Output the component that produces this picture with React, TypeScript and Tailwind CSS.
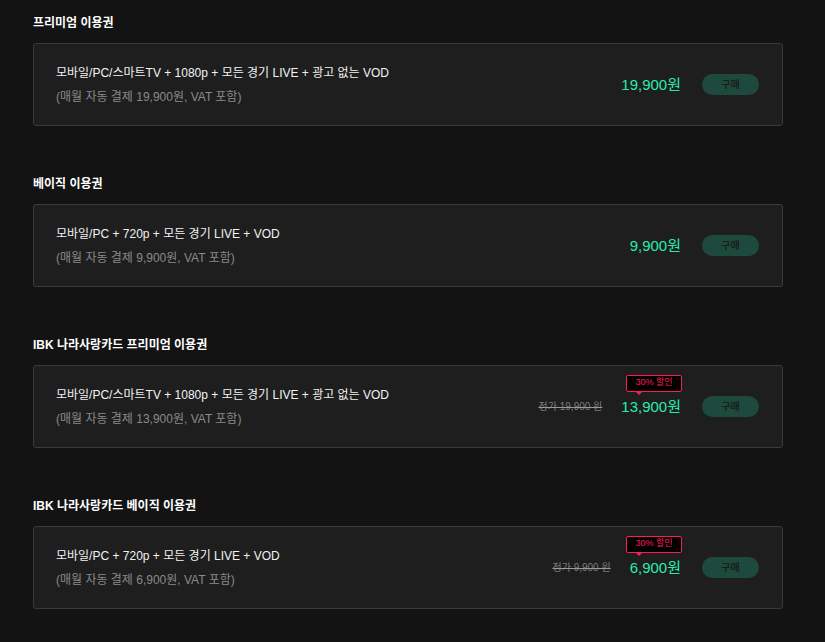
import React from 'react';

type Plan = {
  title: string;
  desc: string;
  billing: string;
  price: string;
  original?: string;
  discount?: string;
};

const plans: Plan[] = [
  {
    title: '프리미엄 이용권',
    desc: '모바일/PC/스마트TV + 1080p + 모든 경기 LIVE + 광고 없는 VOD',
    billing: '(매월 자동 결제 19,900원, VAT 포함)',
    price: '19,900원',
  },
  {
    title: '베이직 이용권',
    desc: '모바일/PC + 720p + 모든 경기 LIVE + VOD',
    billing: '(매월 자동 결제 9,900원, VAT 포함)',
    price: '9,900원',
  },
  {
    title: 'IBK 나라사랑카드 프리미엄 이용권',
    desc: '모바일/PC/스마트TV + 1080p + 모든 경기 LIVE + 광고 없는 VOD',
    billing: '(매월 자동 결제 13,900원, VAT 포함)',
    price: '13,900원',
    original: '정가 19,900 원',
    discount: '30% 할인',
  },
  {
    title: 'IBK 나라사랑카드 베이직 이용권',
    desc: '모바일/PC + 720p + 모든 경기 LIVE + VOD',
    billing: '(매월 자동 결제 6,900원, VAT 포함)',
    price: '6,900원',
    original: '정가 9,900 원',
    discount: '30% 할인',
  },
];

const PlanCard = ({ plan }: { plan: Plan }) => (
  <div className="flex items-center justify-between h-[83px] rounded-[3px] border border-[#3a3a3a] bg-[#1e1e1e] pl-[22px] pr-[23px]">
    <div className="flex flex-col gap-[4px] pt-[1px]">
      <p className="text-[12px] leading-[20px] text-[#f2f2f2]">{plan.desc}</p>
      <p className="text-[12px] leading-[20px] text-[#8a8a8a]">{plan.billing}</p>
    </div>
    <div className="flex items-center">
      {plan.original && (
        <span className="mr-[19px] text-[10px] text-[#7c7c7c] line-through decoration-[#9a9a9a]">
          {plan.original}
        </span>
      )}
      <div className="relative">
        {plan.discount && (
          <div className="absolute right-[-1px] bottom-full mb-[3px] flex h-[17px] w-[56px] items-center justify-center rounded-[2px] border border-[#ff1a55] bg-black text-[9px] text-[#ff1a55]">
            {plan.discount}
            <span className="absolute left-[8px] top-full h-0 w-0 border-x-[4px] border-t-[4px] border-x-transparent border-t-[#ff1a55]" />
          </div>
        )}
        <span className="text-[15px] leading-[24px] text-[#27ecb0]">{plan.price}</span>
      </div>
      <button className="ml-[21px] h-[21px] w-[57px] rounded-full bg-[#1d4a3c] text-[10px] font-medium text-[#161616]">
        구매
      </button>
    </div>
  </div>
);

export default function App() {
  return (
    <div
      className="min-h-screen bg-[#131313] pt-[14px] pl-[33px]"
      style={{ fontFamily: '"Liberation Sans", "Noto Sans CJK KR", sans-serif' }}
    >
      <div className="flex w-[750px] flex-col gap-[49px]">
        {plans.map((plan) => (
          <section key={plan.title}>
            <h2 className="mb-[11px] text-[12px] font-bold leading-[18px] text-white">{plan.title}</h2>
            <PlanCard plan={plan} />
          </section>
        ))}
      </div>
    </div>
  );
}
